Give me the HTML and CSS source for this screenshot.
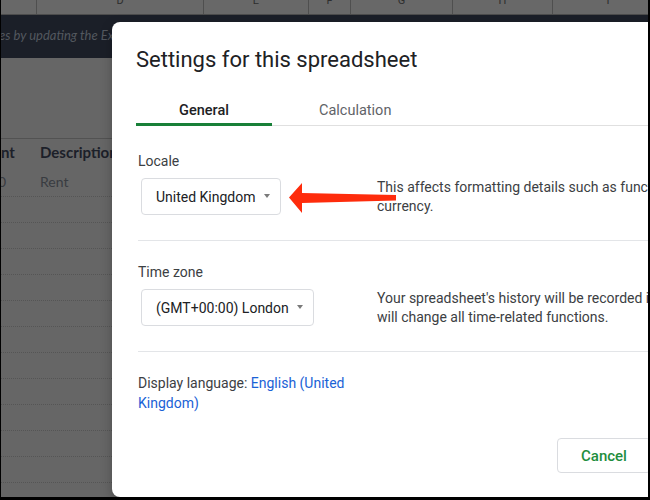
FILE: index.html
```html
<!DOCTYPE html>
<html lang="en">
<head>
<meta charset="utf-8">
<title>Settings for this spreadsheet</title>
<link rel="stylesheet" href="styles.css">
</head>
<body>
<div class="screen">
  <div class="sheet">
    <div class="colhead">
      <div class="ch ch-c"></div>
      <div class="ch ch-d"><span>D</span></div>
      <div class="ch ch-e"><span>E</span></div>
      <div class="ch ch-f"><span>F</span></div>
      <div class="ch ch-g"><span>G</span></div>
      <div class="ch ch-h"><span>H</span></div>
      <div class="ch ch-i"><span>I</span></div>
    </div>
    <div class="banner"><span>es by updating the Expenses sheet categories list.</span></div>
    <div class="spacer"></div>
    <div class="table">
      <div class="trow thead"><span class="c1">nt</span><span class="c2">Description</span></div>
      <div class="trow tdata"><span class="c1 cut">0</span><span class="c2">Rent</span></div>
      <div class="trow"></div>
      <div class="trow"></div>
      <div class="trow"></div>
      <div class="trow"></div>
      <div class="trow"></div>
      <div class="trow"></div>
      <div class="trow"></div>
      <div class="trow"></div>
      <div class="trow"></div>
      <div class="trow"></div>
      <div class="trow"></div>
    </div>
  </div>

  <div class="dialog">
    <h1 class="dlg-title">Settings for this spreadsheet</h1>
    <div class="tabs">
      <div class="tab active">General</div>
      <div class="tab">Calculation</div>
    </div>

    <div class="section first">
      <div class="label">Locale</div>
      <div class="control"><div class="select">United Kingdom<span class="caret"></span></div></div>
      <p class="desc">This affects formatting details such as functions, dates, and<br>currency.</p>
    </div>

    <div class="section">
      <div class="label">Time zone</div>
      <div class="control"><div class="select">(GMT+00:00) London<span class="caret"></span></div></div>
      <p class="desc">Your spreadsheet's history will be recorded in this time zone, and it<br>will change all time-related functions.</p>
    </div>

    <div class="lang">Display language: <a class="link">English (United Kingdom)</a></div>

    <div class="footer">
      <button class="btn cancel">Cancel</button>
      <button class="btn save">Save settings</button>
    </div>
  </div>

  <svg class="arrow" width="110" height="36" viewBox="0 0 110 36">
    <polygon points="1,17.5 14,3 14,13 108,15 108,20.5 14,23 14,33" fill="#fe2c0c"/>
  </svg>
</div>
</body>
</html>
```

FILE: styles.css
```css
* { box-sizing: border-box; }

html, body {
  margin: 0;
  padding: 0;
  background: #000;
}

.screen {
  position: relative;
  margin-left: 1px;
  width: 647px;
  height: 497px;
  overflow: hidden;
  background: #666666;
}

/* ---------- dimmed spreadsheet ---------- */
.sheet {
  font-family: Lato, "Liberation Sans", sans-serif;
}

.colhead {
  display: flex;
  height: 15px;
  background: #686868;
  border-bottom: 1px solid #4c4c4c;
  overflow: hidden;
}

.ch {
  flex: none;
  height: 14px;
  border-right: 1px solid #4f4f4f;
  text-align: center;
  font-family: Roboto, "Liberation Sans", sans-serif;
  font-size: 11px;
  color: #2e2e2e;
}

.ch span {
  display: block;
  line-height: 11px;
  margin-top: -5px;
}

.ch-c { width: 36px; }
.ch-d { width: 167px; }
.ch-e { width: 105px; }
.ch-f { width: 42px; }
.ch-g { width: 102px; }
.ch-h { width: 100px; }
.ch-i { width: 110px; border-right: none; }

.banner {
  height: 43px;
  background: #1b1f28;
  color: #53585f;
  font-style: italic;
  font-size: 13px;
  line-height: 40px;
  white-space: nowrap;
  text-indent: -2px;
}

.spacer {
  height: 80px;
}

.table {
  border-top: 1px solid #525252;
}

.trow {
  display: flex;
  height: 26px;
  border-bottom: 1px dotted #555555;
}

.trow.thead {
  height: 32px;
  border-bottom: none;
  font-weight: 700;
  font-size: 15px;
  line-height: 26px;
  color: #1c2029;
}

.trow.tdata {
  font-size: 14px;
  line-height: 20px;
  padding-top: 1px;
  color: #393c41;
}

.c1 {
  flex: none;
  width: 39px;
  white-space: nowrap;
}

.c1.cut { text-indent: -3px; }

.c2 {
  flex: none;
  white-space: nowrap;
}

/* ---------- dialog ---------- */
.dialog {
  position: absolute;
  left: 111px;
  top: 22px;
  width: 701px;
  height: 475px;
  background: #ffffff;
  border-radius: 8px;
  box-shadow: 0 4px 12px rgba(0, 0, 0, 0.25);
  font-family: Roboto, "Liberation Sans", sans-serif;
  color: #3c4043;
}

.dlg-title {
  margin: 0;
  padding: 24px 24px 0;
  font-size: 22px;
  line-height: 28px;
  font-weight: 400;
  color: #202124;
}

.tabs {
  display: flex;
  margin: 17px 0 0 24px;
  border-bottom: 1px solid #e0e0e0;
}

.tab {
  flex: none;
  margin-bottom: -1px;
  padding: 10px 0 2px;
  border-bottom: 3px solid transparent;
  font-size: 14.5px;
  line-height: 20px;
  color: #5f6368;
}

.tab.active {
  width: 136px;
  text-align: center;
  font-weight: 500;
  color: #202124;
  border-bottom-color: #188038;
}

.tab + .tab {
  padding-left: 47px;
  padding-right: 40px;
}

.section {
  display: grid;
  grid-template-columns: 239px 440px;
  grid-template-rows: 20px 37px;
  row-gap: 7px;
  margin-left: 26px;
  padding: 21px 0 25px;
  border-bottom: 1px solid #e3e5e8;
}

.section.first {
  padding-top: 25px;
}

.label {
  grid-column: 1;
  grid-row: 1;
  font-size: 14px;
  line-height: 20px;
  color: #3c4043;
}

.control {
  grid-column: 1;
  grid-row: 2;
  display: flex;
  padding-left: 3px;
}

.select {
  display: flex;
  align-items: center;
  gap: 8px;
  height: 37px;
  padding: 0 10px 0 14px;
  border: 1px solid #dadce0;
  border-radius: 4px;
  font-size: 14px;
  line-height: 20px;
  color: #202124;
  white-space: nowrap;
}

.caret {
  width: 0;
  height: 0;
  margin-top: -2px;
  border-left: 3.5px solid transparent;
  border-right: 3.5px solid transparent;
  border-top: 4px solid #7a7a7a;
}

.desc {
  grid-column: 2;
  grid-row: 2;
  margin: 0;
  font-size: 14px;
  line-height: 19px;
  color: #3c4043;
  white-space: nowrap;
}

.lang {
  margin-left: 26px;
  padding-top: 21px;
  max-width: 215px;
  font-size: 14px;
  line-height: 20px;
  color: #3c4043;
}

.link {
  color: #1a62d6;
}

.footer {
  display: flex;
  justify-content: flex-end;
  gap: 8px;
  margin-top: 25px;
  padding-right: 24px;
}

.btn {
  flex: none;
  height: 35px;
  padding: 0;
  border: 1px solid #dadce0;
  border-radius: 4px;
  background: #ffffff;
  font-family: Roboto, "Liberation Sans", sans-serif;
  font-size: 15px;
  font-weight: 500;
  color: #1e8e3e;
}

.btn.cancel { width: 94px; }

.btn.save {
  width: 130px;
  background: #1e8e3e;
  border-color: #1e8e3e;
  color: #ffffff;
}

/* ---------- annotation arrow ---------- */
.arrow {
  position: absolute;
  left: 287px;
  top: 180px;
  display: block;
}
```
